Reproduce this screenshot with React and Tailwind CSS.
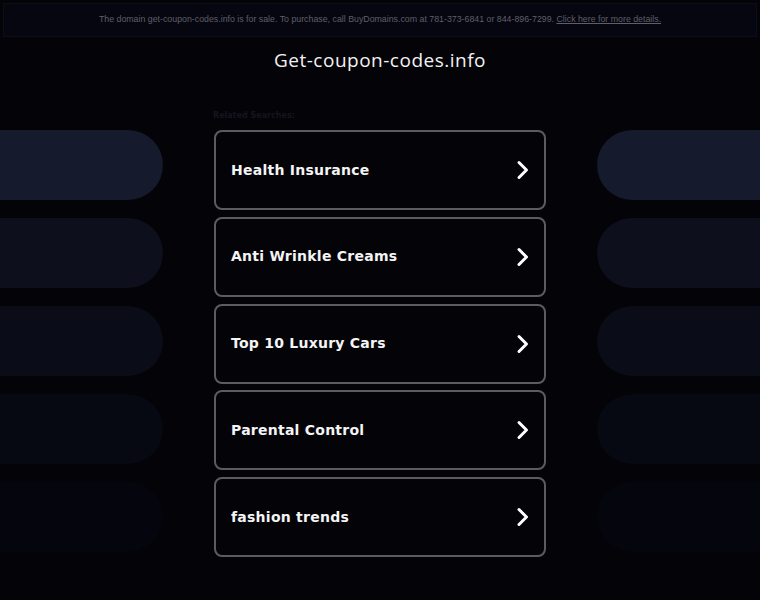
import React from 'react';

const searches = [
  'Health Insurance',
  'Anti Wrinkle Creams',
  'Top 10 Luxury Cars',
  'Parental Control',
  'fashion trends',
];

const pillShades = ['bg-[#151a2c]', 'bg-[#0d101c]', 'bg-[#0a0c17]', 'bg-[#070912]', 'bg-[#05060d]'];

const Chevron = () => (
  <svg width="14" height="20" viewBox="0 0 14 20" fill="none">
    <path d="M3 2.5 L10.5 10 L3 17.5" stroke="white" strokeWidth="3" strokeLinecap="round" strokeLinejoin="round" />
  </svg>
);

const SidePills = ({ side }) => (
  <div className="flex w-[163px] flex-col gap-[18px] pt-[130px]">
    {pillShades.map((shade, i) => (
      <div
        key={i}
        className={`h-[70px] w-full ${shade} ${side === 'left' ? 'rounded-r-[35px]' : 'rounded-l-[35px]'}`}
      />
    ))}
  </div>
);

export default function App() {
  return (
    <div className="relative h-[600px] w-[760px] overflow-hidden bg-[#030308]">
      <div className="absolute inset-x-0 top-0 px-[3px] pt-[3px]">
        <div className="flex h-[34px] items-center justify-center border border-[#0d0d1a] bg-[#060610] text-[8.8px] text-[#5f5f68] [font-family:'Liberation_Sans',Arial,sans-serif]">
          <span>
            The domain get-coupon-codes.info is for sale. To purchase, call BuyDomains.com at 781-373-6841 or 844-896-7299.{' '}
            <span className="underline">Click here for more details.</span>
          </span>
        </div>
      </div>

      <div className="absolute inset-x-0 top-[46px] text-center text-[19px] font-medium tracking-[0.5px] text-[#f2f2f2] [font-family:'Open_Sans',sans-serif]">
        Get-coupon-codes.info
      </div>

      <div className="flex justify-between">
        <SidePills side="left" />

        <div className="relative flex w-[332px] flex-col gap-[6.75px] pt-[130px]">
          <div className="absolute left-[-1px] top-[110px] text-[8px] font-bold text-[#15151f] [font-family:'DejaVu_Sans',sans-serif]">
            Related Searches:
          </div>
          {searches.map((s) => (
            <div
              key={s}
              className="flex h-[80px] items-center justify-between rounded-[8px] border-2 border-[#5c5c60] pl-[15px] pr-[14px]"
            >
              <span className="text-[14px] font-bold tracking-[0.25px] text-[#f4f4f4] [font-family:'DejaVu_Sans',sans-serif]">
                {s}
              </span>
              <Chevron />
            </div>
          ))}
        </div>

        <SidePills side="right" />
      </div>
    </div>
  );
}
